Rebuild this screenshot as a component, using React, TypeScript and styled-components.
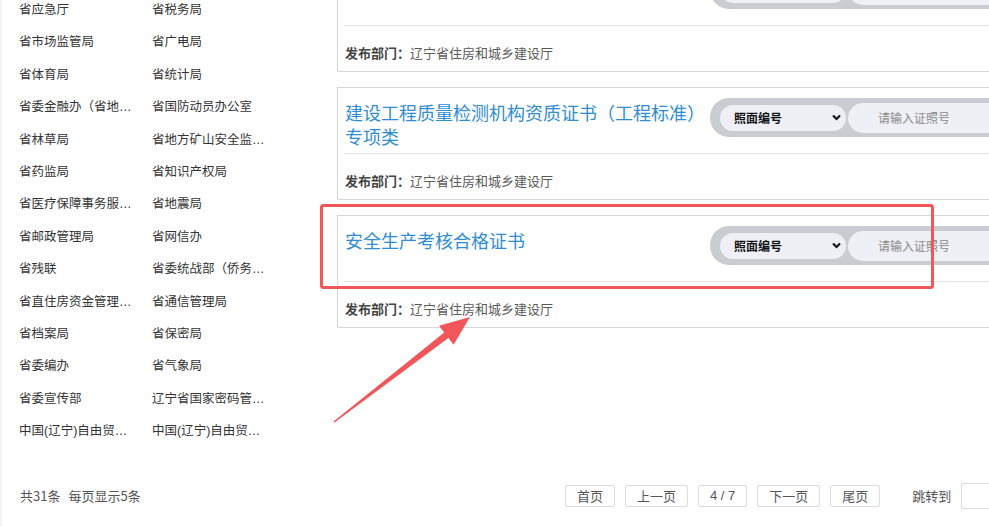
import styled, { createGlobalStyle } from "styled-components";

const GlobalStyle = createGlobalStyle`
  html, body {
    margin: 0;
    padding: 0;
    background: #ffffff;
    overflow: hidden;
  }
  body {
    font-family: "Liberation Sans", "Noto Sans CJK SC", sans-serif;
    color: #333;
  }
`;

const Page = styled.div`
  position: relative;
  width: 989px;
  height: 526px;
  display: flex;
  flex-direction: column;
  overflow: hidden;
  border-left: 2px solid #f3f3f3;
  box-sizing: border-box;
`;

const Content = styled.div`
  flex: 1;
  display: flex;
  overflow: hidden;
`;

const Sidebar = styled.ul`
  flex: 0 0 335px;
  box-sizing: border-box;
  margin: -6px 0 0;
  padding: 0 0 0 17px;
  list-style: none;
  display: grid;
  grid-template-columns: 133px 133px;
  grid-auto-rows: 32.4px;
  align-content: start;
`;

const DeptItem = styled.li`
  width: 115px;
  font-size: 12.5px;
  line-height: 32.4px;
  color: #333;
  white-space: nowrap;
  overflow: hidden;
  text-overflow: ellipsis;
`;

const CardList = styled.div`
  flex: 0 0 720px;
  margin-top: -41px;
  display: flex;
  flex-direction: column;
  gap: 15px;
`;

const Card = styled.div`
  border: 1px solid #d6d6d6;
  padding: 0 6px;
  background: #fff;
`;

const CardHead = styled.div`
  min-height: 66px;
  box-sizing: border-box;
  display: flex;
  align-items: flex-start;
  gap: 3px;
  padding: 10px 0 0 1px;
  border-bottom: 1px solid #e2e2e2;
`;

const CardTitle = styled.div`
  flex: 0 0 362px;
  margin-top: 2px;
  font-size: 18px;
  line-height: 24px;
  color: #2f8dd3;
  font-family: "Noto Sans CJK SC", sans-serif;
`;

const SearchPill = styled.div`
  flex: 1;
  height: 39px;
  box-sizing: border-box;
  display: flex;
  align-items: center;
  gap: 2px;
  padding-left: 10px;
  background: #cbccd2;
  border-radius: 19px 0 0 19px;
`;

const TypeSelect = styled.div`
  flex: 0 0 126px;
  height: 26px;
  box-sizing: border-box;
  display: flex;
  align-items: center;
  justify-content: space-between;
  padding: 0 5px 0 14px;
  background: #eef0f5;
  border-radius: 13px;
  font-size: 12px;
  font-weight: 700;
  color: #111;
  font-family: "Noto Sans CJK SC", sans-serif;
`;

const CertInput = styled.input`
  flex: 1;
  height: 30px;
  box-sizing: border-box;
  border: none;
  outline: none;
  padding: 0 0 0 30px;
  background: #eef0f5;
  border-radius: 15px 0 0 15px;
  font-size: 12px;
  font-family: "Noto Sans CJK SC", sans-serif;
  &::placeholder {
    color: #8a8a8a;
  }
`;

const CardFoot = styled.div`
  padding: 19px 1px 10px;
  font-size: 13px;
  line-height: 16px;
  color: #5a5a5a;
  font-family: "Noto Sans CJK SC", sans-serif;
`;

const FootLabel = styled.b`
  color: #444;
  font-weight: 700;
`;

const Footer = styled.div`
  flex: 0 0 61px;
  display: flex;
  align-items: center;
  padding-left: 18px;
  font-size: 13px;
  color: #555;
`;

const Summary = styled.div`
  flex: 0 0 545px;
  display: flex;
  gap: 8px;
  font-family: "Noto Sans CJK SC", sans-serif;
`;

const Pager = styled.div`
  display: flex;
  align-items: center;
  gap: 10px;
  white-space: nowrap;
`;

const PageButton = styled.span`
  height: 22px;
  box-sizing: border-box;
  display: flex;
  align-items: center;
  padding: 0 11px;
  border: 1px solid #dcdcdc;
  border-radius: 2px;
  font-size: 13px;
  color: #555;
  background: #fff;
`;

const JumpLabel = styled.span`
  margin-left: 22px;
  color: #555;
  font-family: "Noto Sans CJK SC", sans-serif;
`;

const JumpInput = styled.input`
  width: 60px;
  height: 26px;
  box-sizing: border-box;
  border: 1px solid #dcdcdc;
  border-radius: 2px;
  outline: none;
`;

const Overlay = styled.svg`
  position: absolute;
  left: 0;
  top: 0;
  pointer-events: none;
`;

const depts: [string, string][] = [
  ["省应急厅", "省税务局"],
  ["省市场监管局", "省广电局"],
  ["省体育局", "省统计局"],
  ["省委金融办（省地方金融监督管理局）", "省国防动员办公室"],
  ["省林草局", "省地方矿山安全监察局"],
  ["省药监局", "省知识产权局"],
  ["省医疗保障事务服务中心", "省地震局"],
  ["省邮政管理局", "省网信办"],
  ["省残联", "省委统战部（侨务办公室）"],
  ["省直住房资金管理中心", "省通信管理局"],
  ["省档案局", "省保密局"],
  ["省委编办", "省气象局"],
  ["省委宣传部", "辽宁省国家密码管理局"],
  ["中国(辽宁)自由贸易试验区沈阳片区", "中国(辽宁)自由贸易试验区大连片区"],
];

const certs = [
  "建筑施工企业安全生产许可证",
  "建设工程质量检测机构资质证书（工程标准）专项类",
  "安全生产考核合格证书",
];

function Chevron() {
  return (
    <svg width="9" height="7" viewBox="0 0 9 7">
      <polyline
        points="1,1.5 4.5,5 8,1.5"
        fill="none"
        stroke="#111"
        strokeWidth="2.2"
      />
    </svg>
  );
}

function App() {
  return (
    <>
      <GlobalStyle />
      <Page>
        <Content>
          <Sidebar>
            {depts.flat().map((d, i) => (
              <DeptItem key={i}>{d}</DeptItem>
            ))}
          </Sidebar>
          <CardList>
            {certs.map((c) => (
              <Card key={c}>
                <CardHead>
                  <CardTitle>{c}</CardTitle>
                  <SearchPill>
                    <TypeSelect>
                      照面编号
                      <Chevron />
                    </TypeSelect>
                    <CertInput placeholder="请输入证照号" />
                  </SearchPill>
                </CardHead>
                <CardFoot>
                  <FootLabel>发布部门：</FootLabel>辽宁省住房和城乡建设厅
                </CardFoot>
              </Card>
            ))}
          </CardList>
        </Content>
        <Footer>
          <Summary>
            <span>共31条</span>
            <span>每页显示5条</span>
          </Summary>
          <Pager>
            <PageButton>首页</PageButton>
            <PageButton>上一页</PageButton>
            <PageButton>4 / 7</PageButton>
            <PageButton>下一页</PageButton>
            <PageButton>尾页</PageButton>
            <JumpLabel>跳转到</JumpLabel>
            <JumpInput />
          </Pager>
        </Footer>
        <Overlay width="989" height="526" viewBox="0 0 989 526">
          <rect
            x="319.5"
            y="205.5"
            width="611"
            height="82"
            rx="2"
            fill="none"
            stroke="#f0565a"
            strokeWidth="3"
          />
          <polygon
            points="331.5,421.5 442.2,332.5 437,325.8 468,317 451.6,344.8 446.4,338.1 332.5,422.5"
            fill="#f0565a"
          />
        </Overlay>
      </Page>
    </>
  );
}

export default App;
